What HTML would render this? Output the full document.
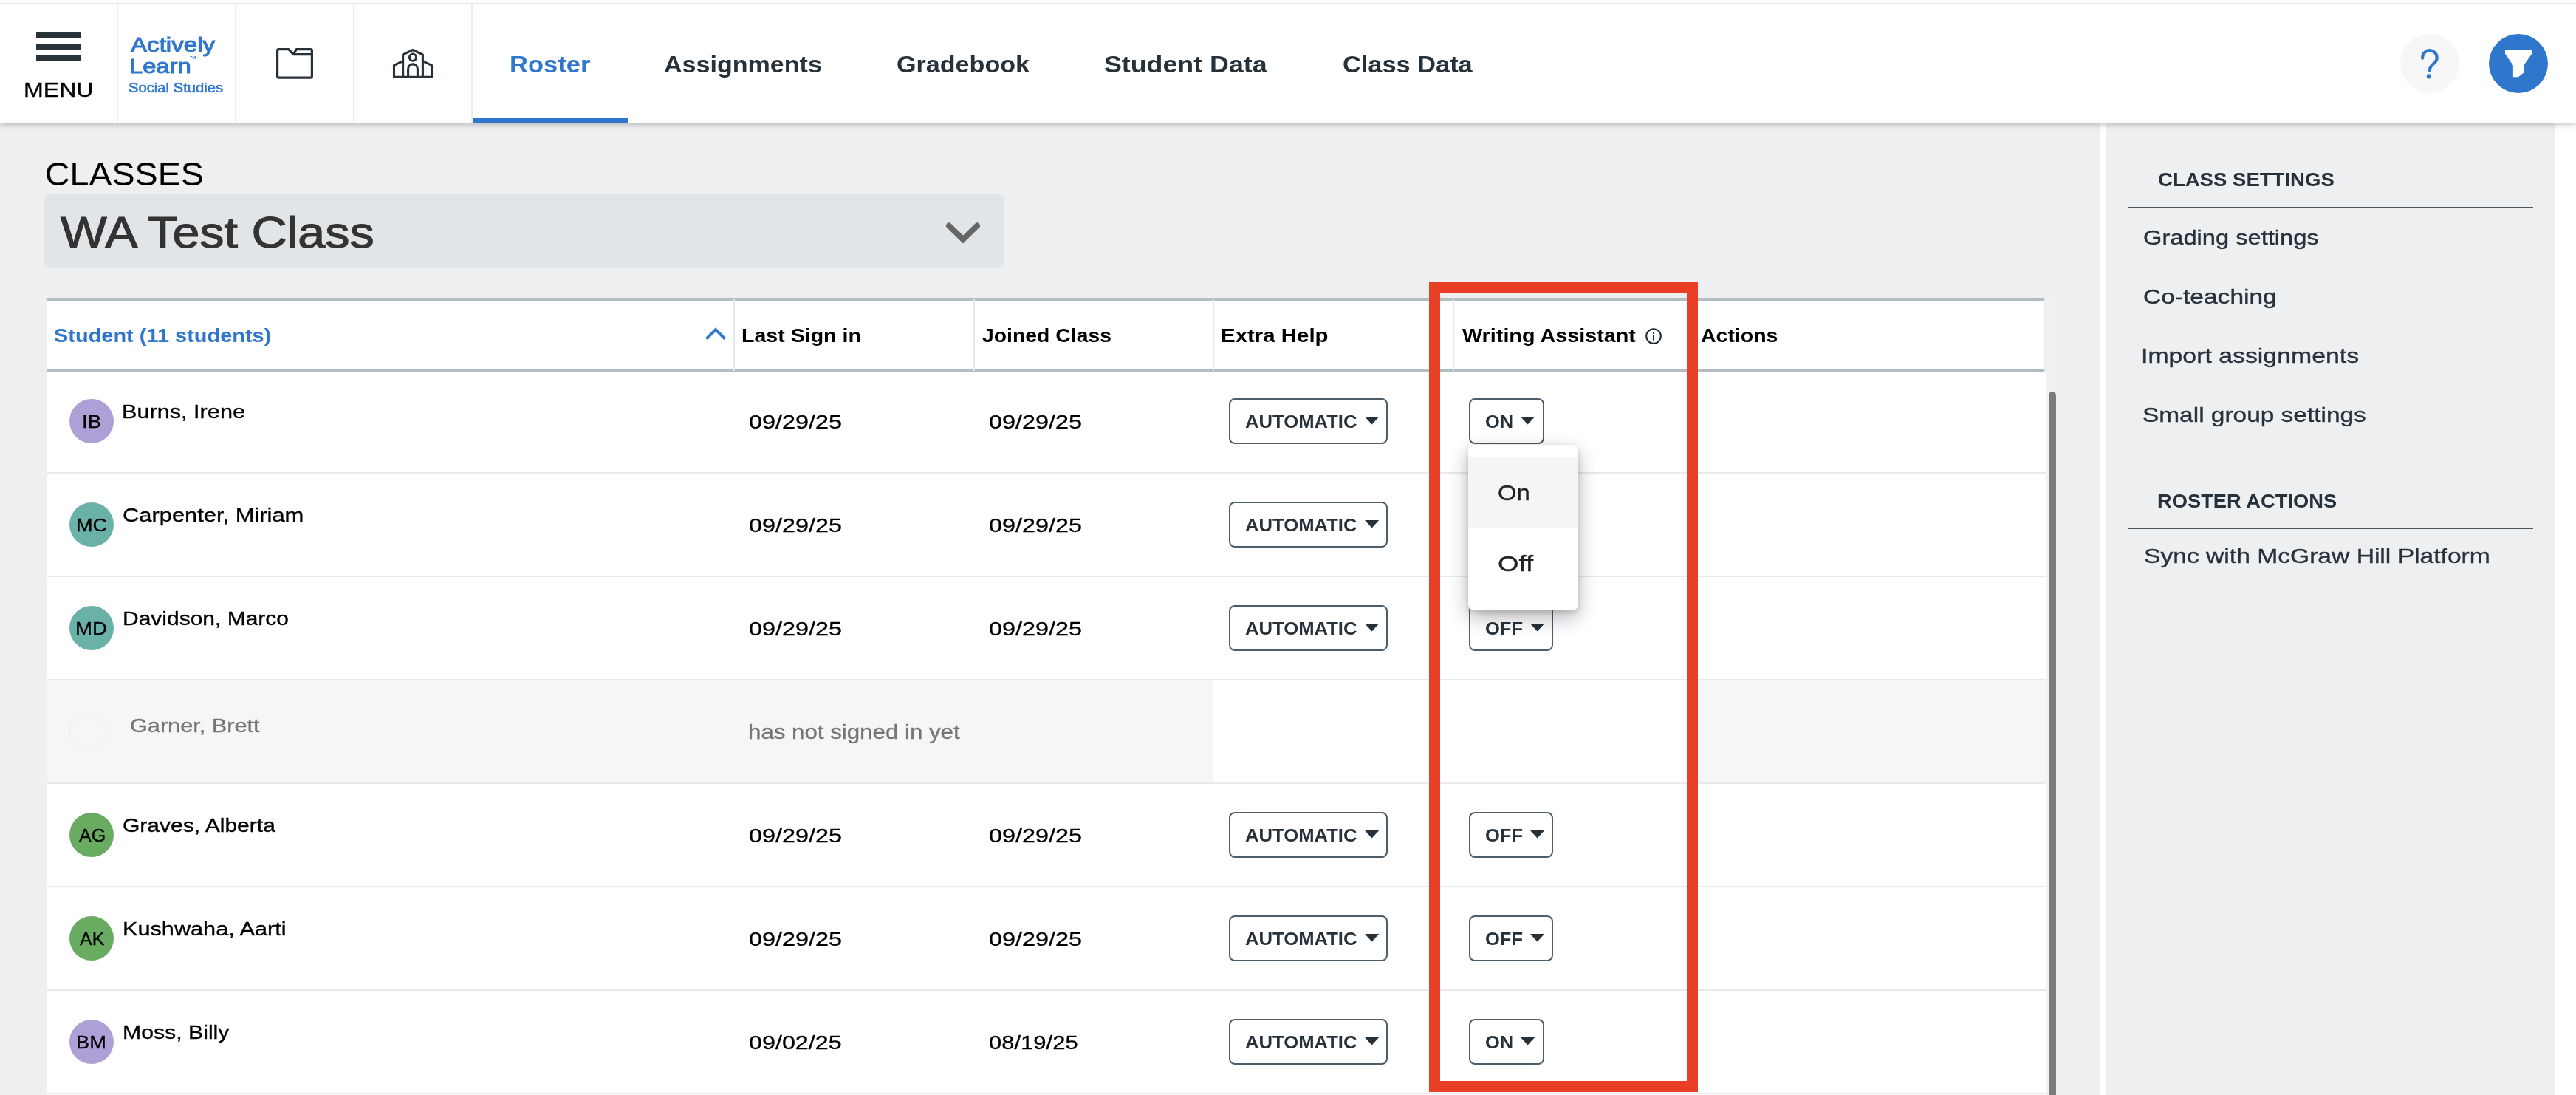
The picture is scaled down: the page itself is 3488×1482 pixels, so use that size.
<!DOCTYPE html>
<html><head><meta charset="utf-8"><title>Roster</title>
<style>
html,body{margin:0;padding:0;overflow:hidden}
body{width:3488px;height:1482px;overflow:hidden;position:relative;background:#fff;font-family:"Liberation Sans",sans-serif;will-change:transform}
.t{position:absolute;white-space:nowrap;line-height:1;transform-origin:0 0}
.b{font-weight:700}
.r{position:absolute}
svg{position:absolute;overflow:visible}
</style></head><body>

<div class="r" style="left:0px;top:166px;width:2844px;height:1316px;background:#eeeff1;"></div>
<div class="r" style="left:2852px;top:166px;width:608px;height:1316px;background:#eeeff1;"></div>
<div class="r" style="left:64px;top:403px;width:2706px;height:1079px;background:#fff;"></div>
<div class="r" style="left:2770px;top:403px;width:14px;height:1079px;background:#f1f1f1;"></div>
<div class="r" style="left:2774px;top:530px;width:10px;height:952px;background:#7b7b7b;border-radius:5px 5px 0 0;"></div>
<div class="r" style="left:64px;top:403px;width:2706px;height:4px;background:#b2bcc3;"></div>
<div class="r" style="left:64px;top:499px;width:2706px;height:4px;background:#b2bcc3;"></div>
<div class="r" style="left:2768px;top:403px;width:2px;height:100px;background:#eceded;"></div>
<div class="r" style="left:993px;top:405px;width:2px;height:97px;background:#e8e9ea;"></div>
<div class="r" style="left:1318px;top:405px;width:2px;height:97px;background:#e8e9ea;"></div>
<div class="r" style="left:1642px;top:405px;width:2px;height:97px;background:#e8e9ea;"></div>
<div class="r" style="left:1967px;top:405px;width:2px;height:97px;background:#e8e9ea;"></div>
<div class="r" style="left:2291px;top:405px;width:2px;height:97px;background:#e8e9ea;"></div>
<div class="r" style="left:64px;top:920px;width:1579px;height:140px;background:#f5f6f8;"></div>
<div class="r" style="left:2292px;top:920px;width:478px;height:140px;background:#f5f6f8;"></div>
<div class="r" style="left:64px;top:639px;width:2706px;height:2px;background:#e7e9eb;"></div>
<div class="r" style="left:64px;top:779px;width:2706px;height:2px;background:#e7e9eb;"></div>
<div class="r" style="left:64px;top:919px;width:2706px;height:2px;background:#e7e9eb;"></div>
<div class="r" style="left:64px;top:1059px;width:2706px;height:2px;background:#e7e9eb;"></div>
<div class="r" style="left:64px;top:1199px;width:2706px;height:2px;background:#e7e9eb;"></div>
<div class="r" style="left:64px;top:1339px;width:2706px;height:2px;background:#e7e9eb;"></div>
<div class="r" style="left:64px;top:1479px;width:2706px;height:2px;background:#e7e9eb;"></div>
<div class="r" style="left:94px;top:540px;width:60px;height:60px;border-radius:50%;background:#ae9fd7"></div>
<div class="t" style="left:110.55px;top:560.30px;font-size:23.5px;color:#000;transform:scaleX(1.1737);-webkit-text-stroke:0.31px #000;">IB</div>
<div class="t" style="left:165.09px;top:544.20px;font-size:26.5px;color:#000;transform:scaleX(1.1567);-webkit-text-stroke:0.34px #000;">Burns, Irene</div>
<div class="t" style="left:1014.35px;top:558.00px;font-size:26px;color:#000;transform:scaleX(1.2455);-webkit-text-stroke:0.34px #000;">09/29/25</div>
<div class="t" style="left:1339.35px;top:558.00px;font-size:26px;color:#000;transform:scaleX(1.2455);-webkit-text-stroke:0.34px #000;">09/29/25</div>
<div class="r" style="left:1664px;top:539px;width:211px;height:58px;border:2px solid #4c5e6b;border-radius:8px;background:#fff"></div>
<div class="t b" style="left:1685.63px;top:559.00px;font-size:24px;color:#27313a;transform:scaleX(1.0686);">AUTOMATIC</div>
<svg style="left:1847.5px;top:563.8px" width="20" height="11"><path d="M0 0H19.2L9.6 10.600Z" fill="#27313a"/></svg>
<div class="r" style="left:1989px;top:539px;width:98px;height:58px;border:2px solid #4c5e6b;border-radius:8px;background:#fff"></div>
<div class="t b" style="left:2010.74px;top:559.00px;font-size:24px;color:#27313a;transform:scaleX(1.0588);">ON</div>
<svg style="left:2059.0px;top:563.8px" width="20" height="11"><path d="M0 0H19.2L9.6 10.600Z" fill="#27313a"/></svg>
<div class="r" style="left:94px;top:680px;width:60px;height:60px;border-radius:50%;background:#6ab1a8"></div>
<div class="t" style="left:102.99px;top:700.30px;font-size:23.5px;color:#000;transform:scaleX(1.1545);-webkit-text-stroke:0.31px #000;">MC</div>
<div class="t" style="left:166.24px;top:684.20px;font-size:26.5px;color:#000;transform:scaleX(1.1649);-webkit-text-stroke:0.34px #000;">Carpenter, Miriam</div>
<div class="t" style="left:1014.35px;top:698.00px;font-size:26px;color:#000;transform:scaleX(1.2455);-webkit-text-stroke:0.34px #000;">09/29/25</div>
<div class="t" style="left:1339.35px;top:698.00px;font-size:26px;color:#000;transform:scaleX(1.2455);-webkit-text-stroke:0.34px #000;">09/29/25</div>
<div class="r" style="left:1664px;top:679px;width:211px;height:58px;border:2px solid #4c5e6b;border-radius:8px;background:#fff"></div>
<div class="t b" style="left:1685.63px;top:699.00px;font-size:24px;color:#27313a;transform:scaleX(1.0686);">AUTOMATIC</div>
<svg style="left:1847.5px;top:703.8px" width="20" height="11"><path d="M0 0H19.2L9.6 10.600Z" fill="#27313a"/></svg>
<div class="r" style="left:94px;top:820px;width:60px;height:60px;border-radius:50%;background:#6ab1a8"></div>
<div class="t" style="left:102.35px;top:840.30px;font-size:23.5px;color:#000;transform:scaleX(1.1727);-webkit-text-stroke:0.31px #000;">MD</div>
<div class="t" style="left:165.84px;top:824.20px;font-size:26.5px;color:#000;transform:scaleX(1.1316);-webkit-text-stroke:0.34px #000;">Davidson, Marco</div>
<div class="t" style="left:1014.35px;top:838.00px;font-size:26px;color:#000;transform:scaleX(1.2455);-webkit-text-stroke:0.34px #000;">09/29/25</div>
<div class="t" style="left:1339.35px;top:838.00px;font-size:26px;color:#000;transform:scaleX(1.2455);-webkit-text-stroke:0.34px #000;">09/29/25</div>
<div class="r" style="left:1664px;top:819px;width:211px;height:58px;border:2px solid #4c5e6b;border-radius:8px;background:#fff"></div>
<div class="t b" style="left:1685.63px;top:839.00px;font-size:24px;color:#27313a;transform:scaleX(1.0686);">AUTOMATIC</div>
<svg style="left:1847.5px;top:843.8px" width="20" height="11"><path d="M0 0H19.2L9.6 10.600Z" fill="#27313a"/></svg>
<div class="r" style="left:1989px;top:819px;width:110px;height:58px;border:2px solid #4c5e6b;border-radius:8px;background:#fff"></div>
<div class="t b" style="left:2010.74px;top:839.00px;font-size:24px;color:#27313a;transform:scaleX(1.0630);">OFF</div>
<svg style="left:2071.9px;top:843.8px" width="20" height="11"><path d="M0 0H19.2L9.6 10.600Z" fill="#27313a"/></svg>
<div class="r" style="left:94px;top:965px;width:48px;height:48px;border-radius:50%;border:1px solid #eceef0"></div>
<div class="t" style="left:176.34px;top:969.00px;font-size:26.5px;color:#767676;transform:scaleX(1.1567);-webkit-text-stroke:0.34px #767676;">Garner, Brett</div>
<div class="t" style="left:1012.99px;top:978.30px;font-size:27px;color:#767676;transform:scaleX(1.1573);-webkit-text-stroke:0.35px #767676;">has not signed in yet</div>
<div class="r" style="left:94px;top:1100px;width:60px;height:60px;border-radius:50%;background:#69ab61"></div>
<div class="t" style="left:107.30px;top:1120.30px;font-size:23.5px;color:#000;transform:scaleX(1.0688);-webkit-text-stroke:0.31px #000;">AG</div>
<div class="t" style="left:166.27px;top:1104.20px;font-size:26.5px;color:#000;transform:scaleX(1.1324);-webkit-text-stroke:0.34px #000;">Graves, Alberta</div>
<div class="t" style="left:1014.35px;top:1118.00px;font-size:26px;color:#000;transform:scaleX(1.2455);-webkit-text-stroke:0.34px #000;">09/29/25</div>
<div class="t" style="left:1339.35px;top:1118.00px;font-size:26px;color:#000;transform:scaleX(1.2455);-webkit-text-stroke:0.34px #000;">09/29/25</div>
<div class="r" style="left:1664px;top:1099px;width:211px;height:58px;border:2px solid #4c5e6b;border-radius:8px;background:#fff"></div>
<div class="t b" style="left:1685.63px;top:1119.00px;font-size:24px;color:#27313a;transform:scaleX(1.0686);">AUTOMATIC</div>
<svg style="left:1847.5px;top:1123.8px" width="20" height="11"><path d="M0 0H19.2L9.6 10.600Z" fill="#27313a"/></svg>
<div class="r" style="left:1989px;top:1099px;width:110px;height:58px;border:2px solid #4c5e6b;border-radius:8px;background:#fff"></div>
<div class="t b" style="left:2010.74px;top:1119.00px;font-size:24px;color:#27313a;transform:scaleX(1.0630);">OFF</div>
<svg style="left:2071.9px;top:1123.8px" width="20" height="11"><path d="M0 0H19.2L9.6 10.600Z" fill="#27313a"/></svg>
<div class="r" style="left:94px;top:1240px;width:60px;height:60px;border-radius:50%;background:#69ab61"></div>
<div class="t" style="left:107.90px;top:1260.30px;font-size:23.5px;color:#000;transform:scaleX(1.0613);-webkit-text-stroke:0.31px #000;">AK</div>
<div class="t" style="left:165.79px;top:1244.20px;font-size:26.5px;color:#000;transform:scaleX(1.1574);-webkit-text-stroke:0.34px #000;">Kushwaha, Aarti</div>
<div class="t" style="left:1014.35px;top:1258.00px;font-size:26px;color:#000;transform:scaleX(1.2455);-webkit-text-stroke:0.34px #000;">09/29/25</div>
<div class="t" style="left:1339.35px;top:1258.00px;font-size:26px;color:#000;transform:scaleX(1.2455);-webkit-text-stroke:0.34px #000;">09/29/25</div>
<div class="r" style="left:1664px;top:1239px;width:211px;height:58px;border:2px solid #4c5e6b;border-radius:8px;background:#fff"></div>
<div class="t b" style="left:1685.63px;top:1259.00px;font-size:24px;color:#27313a;transform:scaleX(1.0686);">AUTOMATIC</div>
<svg style="left:1847.5px;top:1263.8px" width="20" height="11"><path d="M0 0H19.2L9.6 10.600Z" fill="#27313a"/></svg>
<div class="r" style="left:1989px;top:1239px;width:110px;height:58px;border:2px solid #4c5e6b;border-radius:8px;background:#fff"></div>
<div class="t b" style="left:2010.74px;top:1259.00px;font-size:24px;color:#27313a;transform:scaleX(1.0630);">OFF</div>
<svg style="left:2071.9px;top:1263.8px" width="20" height="11"><path d="M0 0H19.2L9.6 10.600Z" fill="#27313a"/></svg>
<div class="r" style="left:94px;top:1380px;width:60px;height:60px;border-radius:50%;background:#ae9fd7"></div>
<div class="t" style="left:102.98px;top:1400.30px;font-size:23.5px;color:#000;transform:scaleX(1.1594);-webkit-text-stroke:0.31px #000;">BM</div>
<div class="t" style="left:165.82px;top:1384.20px;font-size:26.5px;color:#000;transform:scaleX(1.1408);-webkit-text-stroke:0.34px #000;">Moss, Billy</div>
<div class="t" style="left:1014.36px;top:1398.00px;font-size:26px;color:#000;transform:scaleX(1.2424);-webkit-text-stroke:0.34px #000;">09/02/25</div>
<div class="t" style="left:1339.41px;top:1398.00px;font-size:26px;color:#000;transform:scaleX(1.1919);-webkit-text-stroke:0.34px #000;">08/19/25</div>
<div class="r" style="left:1664px;top:1379px;width:211px;height:58px;border:2px solid #4c5e6b;border-radius:8px;background:#fff"></div>
<div class="t b" style="left:1685.63px;top:1399.00px;font-size:24px;color:#27313a;transform:scaleX(1.0686);">AUTOMATIC</div>
<svg style="left:1847.5px;top:1403.8px" width="20" height="11"><path d="M0 0H19.2L9.6 10.600Z" fill="#27313a"/></svg>
<div class="r" style="left:1989px;top:1379px;width:98px;height:58px;border:2px solid #4c5e6b;border-radius:8px;background:#fff"></div>
<div class="t b" style="left:2010.74px;top:1399.00px;font-size:24px;color:#27313a;transform:scaleX(1.0588);">ON</div>
<svg style="left:2059.0px;top:1403.8px" width="20" height="11"><path d="M0 0H19.2L9.6 10.600Z" fill="#27313a"/></svg>
<div class="t b" style="left:73.19px;top:440.50px;font-size:26px;color:#2f76cd;transform:scaleX(1.1134);">Student (11 students)</div>
<svg style="left:955px;top:443px" width="28" height="17"><path d="M1.4 15.600L14 3L26.600 15.600" fill="none" stroke="#2f76cd" stroke-width="4"/></svg>
<div class="t b" style="left:1004.30px;top:440.50px;font-size:26px;color:#000;transform:scaleX(1.0986);">Last Sign in</div>
<div class="t b" style="left:1330.30px;top:440.50px;font-size:26px;color:#000;transform:scaleX(1.0912);">Joined Class</div>
<div class="t b" style="left:1652.94px;top:440.50px;font-size:26px;color:#000;transform:scaleX(1.1317);">Extra Help</div>
<div class="t b" style="left:1979.80px;top:440.50px;font-size:26px;color:#000;transform:scaleX(1.1061);">Writing Assistant</div>
<svg style="left:2228px;top:443.700px" width="22" height="22"><circle cx="11" cy="11" r="9.800" fill="none" stroke="#1f2b33" stroke-width="2.100"/><rect x="10" y="9.800" width="2" height="7" fill="#1f2b33"/><rect x="10" y="5.800" width="2" height="2.200" fill="#1f2b33"/></svg>
<div class="t b" style="left:2303.20px;top:440.50px;font-size:26px;color:#000;transform:scaleX(1.0957);">Actions</div>
<div class="r" style="left:1988px;top:602px;width:149px;height:224px;background:#fff;border-radius:8px;box-shadow:0 10px 28px rgba(0,0,0,.28),0 3px 8px rgba(0,0,0,.14)"></div>
<div class="r" style="left:1988px;top:618px;width:149px;height:96px;background:#f5f5f5;"></div>
<div class="t" style="left:2028.41px;top:652.20px;font-size:30px;color:#222;transform:scaleX(1.0919);-webkit-text-stroke:0.39px #222;">On</div>
<div class="t" style="left:2028.28px;top:747.80px;font-size:30px;color:#222;transform:scaleX(1.2179);-webkit-text-stroke:0.39px #222;">Off</div>
<div class="r" style="left:1935px;top:381px;width:334px;height:1067px;border:15px solid #e93f26"></div>
<div class="t" style="left:60.73px;top:213.00px;font-size:45px;color:#000;transform:scaleX(1.0343);-webkit-text-stroke:0.10px #000;">CLASSES</div>
<div class="r" style="left:60px;top:263px;width:1300px;height:100px;background:#e2e5e8;border-radius:8px;"></div>
<div class="t" style="left:82.00px;top:285.00px;font-size:60px;color:#333;transform:scaleX(1.1076);-webkit-text-stroke:1.15px #333;">WA Test Class</div>
<svg style="left:1281px;top:301px" width="46" height="28"><path d="M4 4.500L23 23L42 4.500" fill="none" stroke="#666" stroke-width="8" stroke-linecap="round" stroke-linejoin="miter"/></svg>
<div class="t b" style="left:2921.64px;top:230.30px;font-size:26px;color:#27313a;transform:scaleX(1.0596);">CLASS SETTINGS</div>
<div class="r" style="left:2882px;top:279.5px;width:548px;height:2px;background:#4b5761;"></div>
<div class="t" style="left:2901.85px;top:307.30px;font-size:28.5px;color:#27313a;transform:scaleX(1.1451);-webkit-text-stroke:0.37px #27313a;">Grading settings</div>
<div class="t" style="left:2901.82px;top:387.30px;font-size:28.5px;color:#27313a;transform:scaleX(1.1762);-webkit-text-stroke:0.37px #27313a;">Co-teaching</div>
<div class="t" style="left:2899.44px;top:467.30px;font-size:28.5px;color:#27313a;transform:scaleX(1.1865);-webkit-text-stroke:0.37px #27313a;">Import assignments</div>
<div class="t" style="left:2900.65px;top:547.30px;font-size:28.5px;color:#27313a;transform:scaleX(1.1725);-webkit-text-stroke:0.37px #27313a;">Small group settings</div>
<div class="t b" style="left:2921.00px;top:665.30px;font-size:26px;color:#27313a;transform:scaleX(1.0498);">ROSTER ACTIONS</div>
<div class="r" style="left:2882px;top:714px;width:548px;height:2px;background:#4b5761;"></div>
<div class="t" style="left:2902.54px;top:737.80px;font-size:28.5px;color:#27313a;transform:scaleX(1.1794);-webkit-text-stroke:0.37px #27313a;">Sync with McGraw Hill Platform</div>
<div class="r" style="left:0;top:0;width:3488px;height:166px;background:#fff;box-shadow:0 2px 8px rgba(0,0,0,.28)"></div>
<div class="r" style="left:0px;top:4px;width:3488px;height:2px;background:#e2e2e0;"></div>
<div class="r" style="left:158px;top:6px;width:2px;height:160px;background:#ececec;"></div>
<div class="r" style="left:318px;top:6px;width:2px;height:160px;background:#ececec;"></div>
<div class="r" style="left:478px;top:6px;width:2px;height:160px;background:#ececec;"></div>
<div class="r" style="left:638px;top:6px;width:2px;height:160px;background:#ececec;"></div>
<div class="r" style="left:49px;top:43px;width:60px;height:8px;background:#283239;"></div>
<div class="r" style="left:49px;top:59px;width:60px;height:8px;background:#283239;"></div>
<div class="r" style="left:49px;top:75px;width:60px;height:8px;background:#283239;"></div>
<div class="t" style="left:32.31px;top:107.70px;font-size:28px;color:#000;transform:scaleX(1.1462);-webkit-text-stroke:0.36px #000;">MENU</div>
<div class="t" style="left:176.70px;top:47.50px;font-size:27px;color:#2f76cd;transform:scaleX(1.2269);-webkit-text-stroke:1.00px #2f76cd;">Actively</div>
<div class="t" style="left:174.68px;top:76.60px;font-size:27px;color:#2f76cd;transform:scaleX(1.2108);-webkit-text-stroke:1.00px #2f76cd;">Learn</div>
<div class="t b" style="left:257.40px;top:76.00px;font-size:5px;color:#2f76cd;transform:scaleX(1.1143);">TM</div>
<div class="t" style="left:174.28px;top:109.60px;font-size:18px;color:#2f76cd;transform:scaleX(1.1232);-webkit-text-stroke:0.55px #2f76cd;">Social Studies</div>
<svg style="left:374px;top:65px" width="50" height="42" viewBox="0 0 50 42"><path d="M1.600 3.400a1.800 1.800 0 0 1 1.800-1.800H16.800L23.300 8.600L27.300 1.600H46.600a1.800 1.800 0 0 1 1.800 1.800V38.400a1.800 1.800 0 0 1-1.800 1.800H3.400a1.800 1.800 0 0 1-1.800-1.800ZM23.300 8.600H48.400" fill="none" stroke="#27313a" stroke-width="3.200" stroke-linejoin="round"/></svg>
<svg style="left:532px;top:66px" width="54" height="40" viewBox="0 0 54 40"><path d="M1.500 38.300V22.300L13.600 16.600M52.500 38.300V22.300L40.400 16.600M0 38.300H54M13.600 38.300V7.800L27 1.500L40.400 7.800V38.300M20.600 38.300V27.300a6.400 6.400 0 0 1 12.800 0V38.300" fill="none" stroke="#27313a" stroke-width="3.100" stroke-linejoin="round"/><circle cx="27" cy="11.700" r="4.600" fill="none" stroke="#27313a" stroke-width="3"/></svg>
<div class="r" style="left:640px;top:160px;width:210px;height:6px;background:#2f76cd;"></div>
<div class="t b" style="left:689.74px;top:71.00px;font-size:32px;color:#2f76cd;transform:scaleX(1.0788);">Roster</div>
<div class="t b" style="left:899.44px;top:71.00px;font-size:32px;color:#27313a;transform:scaleX(1.0643);">Assignments</div>
<div class="t b" style="left:1213.63px;top:71.00px;font-size:32px;color:#27313a;transform:scaleX(1.0661);">Gradebook</div>
<div class="t b" style="left:1494.78px;top:71.00px;font-size:32px;color:#27313a;transform:scaleX(1.1178);">Student Data</div>
<div class="t b" style="left:1817.63px;top:71.00px;font-size:32px;color:#27313a;transform:scaleX(1.0736);">Class Data</div>
<div class="r" style="left:3250px;top:46px;width:80px;height:80px;border-radius:50%;background:#f7f7f7"></div>
<svg style="left:3250px;top:46px" width="80" height="80"><path d="M30.200 32.600A9.700 9.700 0 1 1 46.600 38.900C43.500 41.800 39.900 43.300 39.900 49.200" fill="none" stroke="#2f76cd" stroke-width="4.200" stroke-linecap="round"/><circle cx="38.900" cy="57.300" r="3.100" fill="#2f76cd"/></svg>
<div class="r" style="left:3370px;top:46px;width:80px;height:80px;border-radius:50%;background:#2f76cd"></div>
<svg style="left:3370px;top:46px" width="80" height="80"><path d="M22 22.100H58.200V26.800L47.100 42.400V52.400L39.900 58.300H32.900V42.400L22 26.800Z" fill="#fff"/></svg>
</body></html>
